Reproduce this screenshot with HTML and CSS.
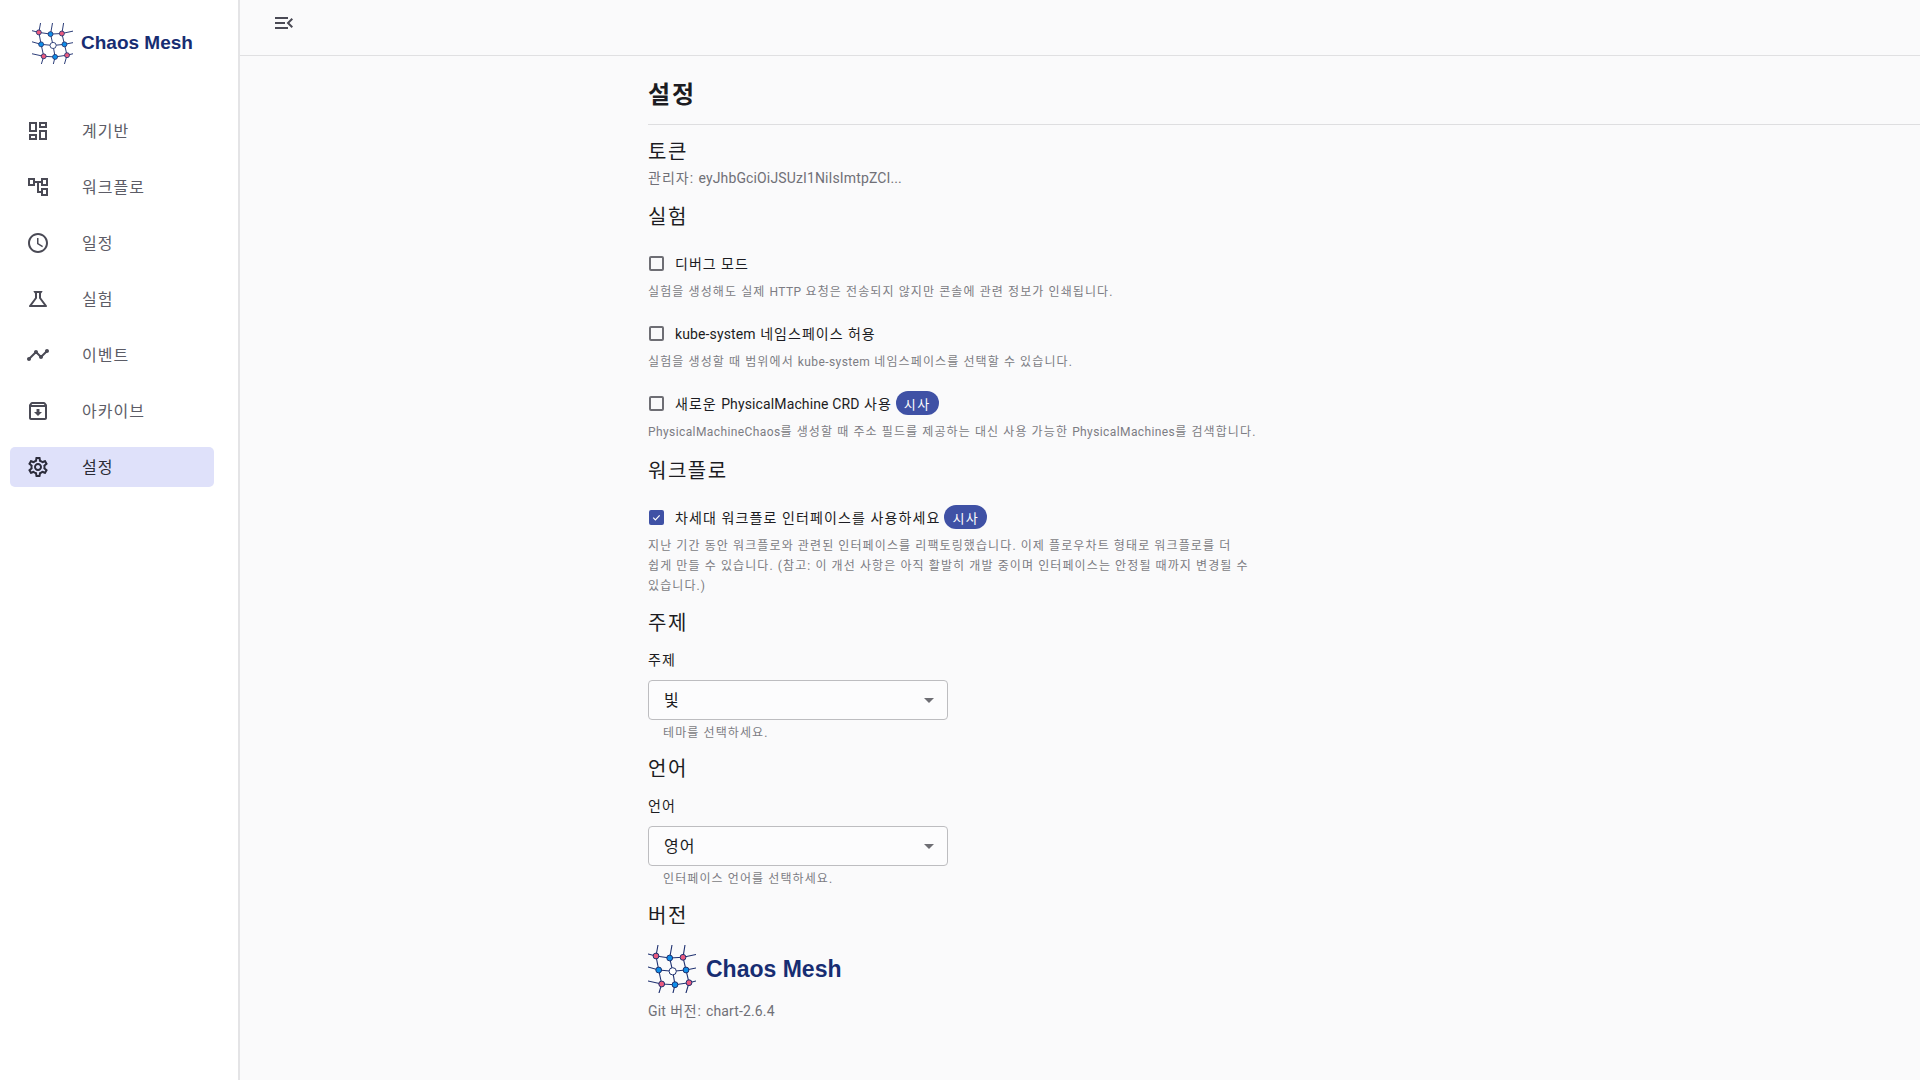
FILE: index.html
```html
<!DOCTYPE html>
<html lang="ko">
<head>
  <meta charset="UTF-8">
  <title>Chaos Mesh - 설정</title>
  <link rel="stylesheet" href="styles.css">
</head>
<body>
  <svg class="defs" width="0" height="0">
    <symbol id="logo-mark" viewBox="0 0 48 48">
      <g fill="none" stroke="#1f3170" stroke-width="1.1" stroke-linecap="round">
        <path d="M8 11L21.7 13L35 12.3L48 9.5M0 9L8 11M0 22L10.7 25L24.7 26.3L38 25L48 23M0 36L13.7 39L27 39.7L41 37.7L48 36"/>
        <path d="M10 0L8 11L10.7 25L13.7 39L11 48M24 0L21.7 13L24.7 26.3L27 39.7L25 48M37 0L35 12.3L38 25L41 37.7L38 48"/>
      </g>
      <g stroke="#1f3170" stroke-width="1">
        <circle cx="8" cy="11" r="2.9" fill="#ea5a7e"/>
        <circle cx="21.7" cy="13" r="2.9" fill="#0f8ee9"/>
        <circle cx="35" cy="12.3" r="2.9" fill="#ea5a7e"/>
        <circle cx="10.7" cy="25" r="2.9" fill="#0f8ee9"/>
        <circle cx="24.7" cy="26.3" r="3.6" fill="#fff"/>
        <circle cx="38" cy="25" r="2.9" fill="#0f8ee9"/>
        <circle cx="13.7" cy="39" r="2.9" fill="#ea5a7e"/>
        <circle cx="27" cy="39.7" r="2.9" fill="#0f8ee9"/>
        <circle cx="41" cy="37.7" r="2.9" fill="#ea5a7e"/>
      </g>
    </symbol>
  </svg>

  <div class="app">
    <aside class="sidebar">
      <div class="brand">
        <svg class="brand-mark"><use href="#logo-mark"/></svg>
        <span class="brand-name">Chaos Mesh</span>
      </div>
      <nav class="nav">
        <a class="nav-item">
          <svg class="nav-icon" viewBox="0 0 24 24"><path d="M19 5v2h-4V5h4M9 5v6H5V5h4m10 8v6h-4v-6h4M9 17v2H5v-2h4M21 3h-8v6h8V3zM11 3H3v10h8V3zm10 8h-8v10h8V11zm-10 4H3v6h8v-6z"/></svg>
          <span>계기반</span>
        </a>
        <a class="nav-item">
          <svg class="nav-icon" viewBox="0 0 24 24"><path d="M22 11V3h-7v3H9V3H2v8h7V8h2v10h4v3h7v-8h-7v3h-2V8h2v3h7zM7 9H4V5h3v4zm10 6h3v4h-3v-4zm0-10h3v4h-3V5z"/></svg>
          <span>워크플로</span>
        </a>
        <a class="nav-item">
          <svg class="nav-icon" viewBox="0 0 24 24"><path d="M11.99 2C6.47 2 2 6.48 2 12s4.47 10 9.99 10C17.52 22 22 17.52 22 12S17.52 2 11.99 2zM12 20c-4.42 0-8-3.58-8-8s3.58-8 8-8 8 3.58 8 8-3.58 8-8 8zm.5-13H11v6l5.25 3.15.75-1.23-4.5-2.67z"/></svg>
          <span>일정</span>
        </a>
        <a class="nav-item">
          <svg class="nav-icon" viewBox="0 0 24 24"><path d="M13 11.33 18 18H6l5-6.67V6h2m2.96-2H8.04c-.42 0-.65.48-.39.81L9 6.5v4.17L3.2 18.4c-.49.66-.02 1.6.8 1.6h16c.82 0 1.29-.94.8-1.6L15 10.67V6.5l1.35-1.69c.26-.33.03-.81-.39-.81z"/></svg>
          <span>실험</span>
        </a>
        <a class="nav-item">
          <svg class="nav-icon" viewBox="0 0 24 24"><path d="M23 8c0 1.1-.9 2-2 2-.18 0-.35-.02-.51-.07l-3.56 3.55c.05.16.07.34.07.52 0 1.1-.9 2-2 2s-2-.9-2-2c0-.18.02-.36.07-.52l-2.55-2.55c-.16.05-.34.07-.52.07s-.36-.02-.52-.07l-4.55 4.56c.05.16.07.33.07.51 0 1.1-.9 2-2 2s-2-.9-2-2 .9-2 2-2c.18 0 .35.02.51.07l4.56-4.55C8.02 9.36 8 9.18 8 9c0-1.1.9-2 2-2s2 .9 2 2c0 .18-.02.36-.07.52l2.55 2.55c.16-.05.34-.07.52-.07s.36.02.52.07l3.55-3.56C19.02 8.35 19 8.18 19 8c0-1.1.9-2 2-2s2 .9 2 2z"/></svg>
          <span>이벤트</span>
        </a>
        <a class="nav-item">
          <svg class="nav-icon" viewBox="0 0 24 24"><path d="m20.54 5.23-1.39-1.68C18.88 3.21 18.47 3 18 3H6c-.47 0-.88.21-1.16.55L3.46 5.23C3.17 5.57 3 6.02 3 6.5V19c0 1.1.9 2 2 2h14c1.1 0 2-.9 2-2V6.5c0-.48-.17-.93-.46-1.27zM6.24 5h11.52l.81.97H5.44l.8-.97zM5 19V8h14v11H5zm8.45-9h-2.9v3H8l4 4 4-4h-2.55z"/></svg>
          <span>아카이브</span>
        </a>
        <a class="nav-item active">
          <svg class="nav-icon" viewBox="0 0 24 24"><path d="M19.43 12.98c.04-.32.07-.64.07-.98 0-.34-.03-.66-.07-.98l2.11-1.65c.19-.15.24-.42.12-.64l-2-3.46c-.09-.16-.26-.25-.44-.25-.06 0-.12.01-.17.03l-2.49 1c-.52-.4-1.08-.73-1.69-.98l-.38-2.65C14.46 2.18 14.25 2 14 2h-4c-.25 0-.46.18-.49.42l-.38 2.65c-.61.25-1.17.59-1.69.98l-2.49-1c-.06-.02-.12-.03-.18-.03-.17 0-.34.09-.43.25l-2 3.46c-.13.22-.07.49.12.64l2.11 1.65c-.04.32-.07.65-.07.98 0 .33.03.66.07.98l-2.11 1.65c-.19.15-.24.42-.12.64l2 3.46c.09.16.26.25.44.25.06 0 .12-.01.17-.03l2.49-1c.52.4 1.08.73 1.69.98l.38 2.65c.03.24.24.42.49.42h4c.25 0 .46-.18.49-.42l.38-2.65c.61-.25 1.17-.59 1.69-.98l2.49 1c.06.02.12.03.18.03.17 0 .34-.09.43-.25l2-3.46c.12-.22.07-.49-.12-.64l-2.11-1.65zm-1.98-1.71c.04.31.05.52.05.73 0 .21-.02.43-.05.73l-.14 1.13.89.7 1.08.84-.7 1.21-1.27-.51-1.04-.42-.9.68c-.43.32-.84.56-1.25.73l-1.06.43-.16 1.13-.2 1.35h-1.4l-.19-1.35-.16-1.13-1.06-.43c-.43-.18-.83-.41-1.23-.71l-.91-.7-1.06.43-1.27.51-.7-1.21 1.08-.84.89-.7-.14-1.13c-.03-.31-.05-.54-.05-.74s.02-.43.05-.73l.14-1.13-.89-.7-1.08-.84.7-1.21 1.27.51 1.04.42.9-.68c.43-.32.84-.56 1.25-.73l1.06-.43.16-1.13.2-1.35h1.39l.19 1.35.16 1.13 1.06.43c.43.18.83.41 1.23.71l.91.7 1.06-.43 1.27-.51.7 1.21-1.07.85-.89.7.14 1.13zM12 8c-2.21 0-4 1.79-4 4s1.79 4 4 4 4-1.79 4-4-1.79-4-4-4zm0 6c-1.1 0-2-.9-2-2s.9-2 2-2 2 .9 2 2-.9 2-2 2z"/></svg>
          <span>설정</span>
        </a>
      </nav>
    </aside>

    <main class="main">
      <header class="toolbar">
        <svg class="toolbar-icon" viewBox="0 0 24 24"><path d="M3 18h13v-2H3v2zm0-5h10v-2H3v2zm0-7v2h13V6H3zm18 9.59L17.42 12 21 8.41 19.59 7l-5 5 5 5L21 15.59z"/></svg>
      </header>

      <div class="content">
        <h1 class="page-title">설정</h1>

        <div class="settings">
          <h2 class="section-title token-title">토큰</h2>
          <p class="token-line">관리자: <span class="latin">eyJhbGciOiJSUzI1NiIsImtpZCI...</span></p>

          <h2 class="section-title">실험</h2>

          <div class="option first">
            <label class="option-label">
              <span class="checkbox"></span>
              <span>디버그 모드</span>
            </label>
            <p class="hint">실험을 생성해도 실제 <span class="latin">HTTP</span> 요청은 전송되지 않지만 콘솔에 관련 정보가 인쇄됩니다.</p>
          </div>
          <div class="option">
            <label class="option-label">
              <span class="checkbox"></span>
              <span><span class="latin">kube-system</span> 네임스페이스 허용</span>
            </label>
            <p class="hint">실험을 생성할 때 범위에서 <span class="latin">kube-system</span> 네임스페이스를 선택할 수 있습니다.</p>
          </div>
          <div class="option">
            <label class="option-label">
              <span class="checkbox"></span>
              <span>새로운 <span class="latin">PhysicalMachine CRD</span> 사용</span>
              <span class="chip">시사</span>
            </label>
            <p class="hint"><span class="latin">PhysicalMachineChaos</span>를 생성할 때 주소 필드를 제공하는 대신 사용 가능한 <span class="latin">PhysicalMachines</span>를 검색합니다.</p>
          </div>

          <h2 class="section-title workflow-title">워크플로</h2>

          <div class="option workflow-option">
            <label class="option-label">
              <span class="checkbox checked">
                <svg viewBox="0 0 16 16"><path d="M3.2 8.2l3.2 3.2 6.2-6.6" fill="none" stroke="#fff" stroke-width="1.7"/></svg>
              </span>
              <span>차세대 워크플로 인터페이스를 사용하세요</span>
              <span class="chip">시사</span>
            </label>
            <p class="hint">지난 기간 동안 워크플로와 관련된 인터페이스를 리팩토링했습니다. 이제 플로우차트 형태로 워크플로를 더 쉽게 만들 수 있습니다. (참고: 이 개선 사항은 아직 활발히 개발 중이며 인터페이스는 안정될 때까지 변경될 수 있습니다.)</p>
          </div>

          <h2 class="section-title">주제</h2>
          <div class="field">
            <div class="field-label">주제</div>
            <div class="select">
              <span class="select-value">빛</span>
              <span class="select-arrow"></span>
            </div>
            <div class="field-help">테마를 선택하세요.</div>
          </div>

          <h2 class="section-title language-title">언어</h2>
          <div class="field">
            <div class="field-label">언어</div>
            <div class="select">
              <span class="select-value">영어</span>
              <span class="select-arrow"></span>
            </div>
            <div class="field-help">인터페이스 언어를 선택하세요.</div>
          </div>

          <h2 class="section-title version-title">버전</h2>
          <div class="version-logo">
            <svg class="version-mark"><use href="#logo-mark"/></svg>
            <span class="version-name">Chaos Mesh</span>
          </div>
          <p class="version-line"><span class="latin">Git</span> 버전: <span class="latin">chart-2.6.4</span></p>
        </div>
      </div>
    </main>
  </div>
</body>
</html>
```

FILE: styles.css
```css
* {
  box-sizing: border-box;
}

body {
  margin: 0;
  font-family: Roboto, "Noto Sans CJK KR", sans-serif;
  font-size: 14px;
  color: #1c1c22;
  background: #fafafb;
}

h1, h2, p {
  margin: 0;
}

.defs {
  display: block;
  height: 0;
}

.app {
  display: flex;
  height: 1080px;
  overflow: hidden;
}

/* sidebar */
.sidebar {
  width: 240px;
  flex-shrink: 0;
  background: #fff;
  border-right: 2px solid #e4e4e6;
}

.brand {
  display: flex;
  align-items: center;
  height: 86px;
  padding-left: 32px;
}

.brand-mark {
  width: 41px;
  height: 41px;
  margin-right: 8px;
}

.brand-name {
  font-family: "Liberation Sans", Arial, sans-serif;
  font-weight: 700;
  font-size: 19px;
  color: #172d72;
}

.nav {
  display: flex;
  flex-direction: column;
  gap: 16px;
  padding: 25px 24px 0 10px;
}

.nav-item {
  display: flex;
  align-items: center;
  height: 40px;
  padding-left: 16px;
  border-radius: 5px;
  font-size: 16px;
  letter-spacing: 1px;
  color: #5c5c66;
}

.nav-item span {
  margin-bottom: 2px;
}

.nav-item.active {
  background: #dfe1fa;
  color: #2b2b35;
}

.nav-icon {
  width: 24px;
  height: 24px;
  margin-right: 32px;
  fill: #4a4a55;
}

.active .nav-icon {
  fill: #2b2b3a;
}

/* main */
.main {
  flex: 1;
  min-width: 0;
}

.toolbar {
  display: flex;
  align-items: flex-start;
  height: 56px;
  padding: 11px 0 0 32px;
  border-bottom: 1px solid #e0e0e2;
}

.toolbar-icon {
  width: 24px;
  height: 24px;
  fill: #4a4a55;
}

.content {
  padding: 23px 0 0 408px;
}

.page-title {
  height: 46px;
  font-size: 24px;
  line-height: 32px;
  font-weight: 700;
  letter-spacing: 2px;
  border-bottom: 1px solid #dedee0;
}

.settings {
  width: 609px;
  word-break: keep-all;
}

.latin {
  letter-spacing: .13px;
}

.section-title {
  margin-top: 13px;
  font-size: 20px;
  line-height: 28px;
  font-weight: 400;
  letter-spacing: 1.5px;
  color: #1c1c22;
}

.token-line {
  margin-top: 2px;
  margin-bottom: 15px;
  line-height: 20px;
  letter-spacing: 1px;
  color: #707077;
}

.option {
  margin-top: 19px;
}

.option.first {
  margin-top: 20px;
}

.workflow-title {
  margin-top: 15px;
}

.language-title {
  margin-top: 12px;
}

.option-label {
  display: flex;
  align-items: center;
  height: 24px;
  letter-spacing: 1px;
}

.checkbox {
  display: flex;
  width: 15px;
  height: 15px;
  margin: 0 11px 0 1px;
  border: 2px solid #6e6e74;
  border-radius: 2px;
}

.checkbox.checked {
  background: #3f51a5;
  border-color: #3f51a5;
}

.checkbox svg {
  width: 11px;
  height: 11px;
}

.chip {
  display: flex;
  align-items: center;
  justify-content: center;
  width: 43px;
  height: 24px;
  margin-left: 4px;
  border-radius: 12px;
  background: #3f51a5;
  color: #fff;
  font-size: 13px;
  letter-spacing: 1.5px;
}

.hint {
  margin-top: 7px;
  font-size: 12px;
  line-height: 20px;
  letter-spacing: 1.1px;
  color: #7c7c83;
}

.hint .latin {
  letter-spacing: .4px;
}

.option.workflow-option {
  margin-top: 20px;
}

.workflow-option .option-label {
  letter-spacing: 1.1px;
}

.field-label {
  margin-top: 13px;
  line-height: 20px;
  letter-spacing: 1px;
}

.select {
  display: flex;
  align-items: center;
  justify-content: space-between;
  width: 300px;
  height: 40px;
  margin-top: 10px;
  padding: 0 13px 0 15px;
  border: 1px solid #bdbdc0;
  border-radius: 4px;
  background: #fcfcfd;
  font-size: 16px;
  letter-spacing: 1px;
}

.select-value {
  margin-bottom: 3px;
}

.select-arrow {
  width: 0;
  height: 0;
  border-left: 5px solid transparent;
  border-right: 5px solid transparent;
  border-top: 5px solid #6e6e74;
}

.field-help {
  margin-top: 3px;
  padding-left: 15px;
  font-size: 12px;
  line-height: 20px;
  letter-spacing: 1.1px;
  color: #7c7c83;
}

.version-logo {
  display: flex;
  align-items: center;
  margin-top: 15px;
}

.version-mark {
  width: 48px;
  height: 48px;
  margin-right: 10px;
}

.version-name {
  font-family: "Liberation Sans", Arial, sans-serif;
  font-weight: 700;
  font-size: 23px;
  color: #172d72;
}

.version-line {
  margin-top: 8px;
  line-height: 20px;
  letter-spacing: .8px;
  color: #707077;
}
```
